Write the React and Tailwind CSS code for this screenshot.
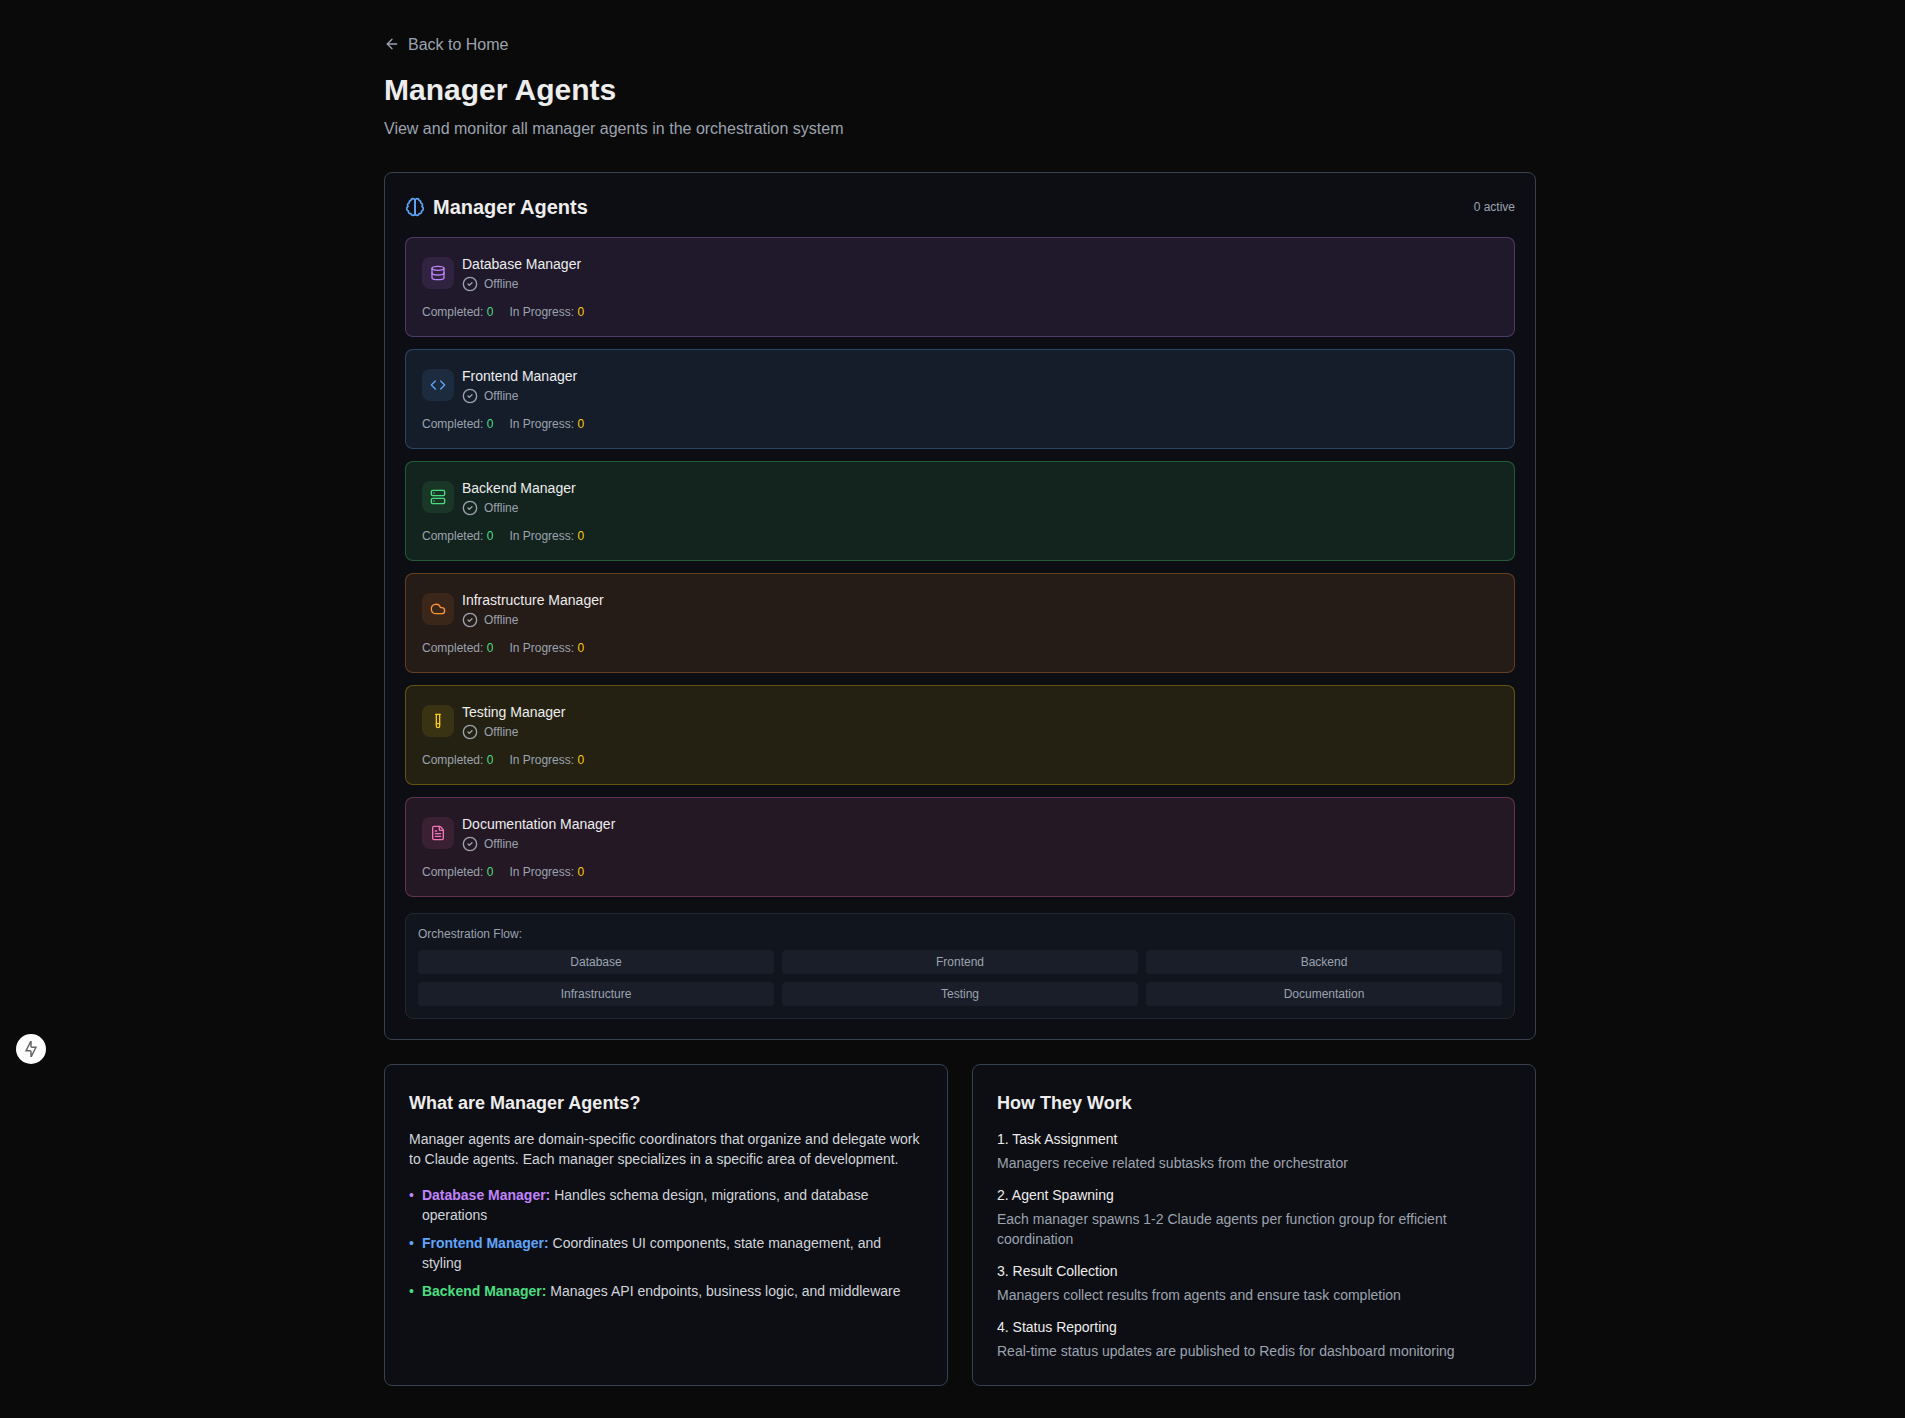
import React from "react";
import { ArrowLeft, Database, Code, Server, Cloud, TestTube, FileText, CircleCheck } from "lucide-react";

const managers = [
  { name: "Database Manager", Icon: Database, card: "bg-[#c084fc]/10 border-[#c084fc]/30", tile: "bg-[#c084fc]/10 text-[#c084fc]" },
  { name: "Frontend Manager", Icon: Code, card: "bg-[#60a5fa]/10 border-[#60a5fa]/30", tile: "bg-[#60a5fa]/10 text-[#60a5fa]" },
  { name: "Backend Manager", Icon: Server, card: "bg-[#4ade80]/10 border-[#4ade80]/30", tile: "bg-[#4ade80]/10 text-[#4ade80]" },
  { name: "Infrastructure Manager", Icon: Cloud, card: "bg-[#fb923c]/10 border-[#fb923c]/30", tile: "bg-[#fb923c]/10 text-[#fb923c]" },
  { name: "Testing Manager", Icon: TestTube, card: "bg-[#facc15]/10 border-[#facc15]/30", tile: "bg-[#facc15]/10 text-[#facc15]" },
  { name: "Documentation Manager", Icon: FileText, card: "bg-[#f472b6]/10 border-[#f472b6]/30", tile: "bg-[#f472b6]/10 text-[#f472b6]" },
];

const flow = ["Database", "Frontend", "Backend", "Infrastructure", "Testing", "Documentation"];

const bullets = [
  { name: "Database Manager:", color: "text-[#c084fc]", text: "Handles schema design, migrations, and database operations" },
  { name: "Frontend Manager:", color: "text-[#60a5fa]", text: "Coordinates UI components, state management, and styling" },
  { name: "Backend Manager:", color: "text-[#4ade80]", text: "Manages API endpoints, business logic, and middleware" },
];

const steps = [
  { title: "1. Task Assignment", text: "Managers receive related subtasks from the orchestrator" },
  { title: "2. Agent Spawning", text: "Each manager spawns 1-2 Claude agents per function group for efficient coordination" },
  { title: "3. Result Collection", text: "Managers collect results from agents and ensure task completion" },
  { title: "4. Status Reporting", text: "Real-time status updates are published to Redis for dashboard monitoring" },
];

function BrainIcon({ className }) {
  return (
    <svg
      viewBox="0 0 24 24"
      className={className}
      fill="none"
      stroke="currentColor"
      strokeWidth="2"
      strokeLinecap="round"
      strokeLinejoin="round"
    >
      <path d="M9.5 2A2.5 2.5 0 0 1 12 4.5v15a2.5 2.5 0 0 1-4.96.44 2.5 2.5 0 0 1-2.96-3.08 3 3 0 0 1-.34-5.58 2.5 2.5 0 0 1 1.32-4.24 2.5 2.5 0 0 1 1.98-3A2.5 2.5 0 0 1 9.5 2Z" />
      <path d="M14.5 2A2.5 2.5 0 0 0 12 4.5v15a2.5 2.5 0 0 0 4.96.44 2.5 2.5 0 0 0 2.96-3.08 3 3 0 0 0 .34-5.58 2.5 2.5 0 0 0-1.32-4.24 2.5 2.5 0 0 0-1.98-3A2.5 2.5 0 0 0 14.5 2Z" />
    </svg>
  );
}

function ManagerCard({ name, Icon, card, tile }) {
  return (
    <div className={`rounded-lg border p-4 ${card}`}>
      <div className="mb-3 flex items-center gap-2">
        <div className={`rounded-lg p-2 ${tile}`}>
          <Icon className="size-4" />
        </div>
        <div>
          <h3 className="text-sm">{name}</h3>
          <div className="mt-0.5 flex items-center gap-1.5">
            <CircleCheck className="size-4 text-[#9ca3af]" />
            <span className="text-xs text-[#9ca3af]">Offline</span>
          </div>
        </div>
      </div>
      <div className="flex gap-4 text-xs text-[#9ca3af]">
        <div>
          Completed: <span className="text-[#4ade80]">0</span>
        </div>
        <div>
          In Progress: <span className="text-[#facc15]">0</span>
        </div>
      </div>
    </div>
  );
}

export default function App() {
  return (
    <div className="min-h-screen overflow-hidden bg-[#0a0a0a] pt-8 pb-8 font-['Liberation_Sans',Arial,sans-serif] text-[#ededed]">
      <main className="ml-96 w-[1152px]">
        <header className="mb-8">
          <a className="mb-4 flex w-fit items-center gap-2 text-[#9ca3af]" href="#">
            <ArrowLeft className="size-4" />
            <span className="translate-y-px">Back to Home</span>
          </a>
          <h1 className="mb-2 text-3xl font-bold">Manager Agents</h1>
          <p className="translate-y-px text-[#9ca3af]">View and monitor all manager agents in the orchestration system</p>
        </header>

        <section className="rounded-lg border border-[#374151] bg-[#0d0e13] p-5">
          <div className="mb-4 flex items-center justify-between">
            <h2 className="flex items-center gap-2 text-xl font-semibold">
              <BrainIcon className="size-5 text-[#60a5fa]" />
              Manager Agents
            </h2>
            <span className="text-xs text-[#9ca3af]">0 active</span>
          </div>
          <div className="flex flex-col gap-3">
            {managers.map((m) => (
              <ManagerCard key={m.name} {...m} />
            ))}
          </div>
          <div className="mt-4 rounded-lg border border-[#1f2732] bg-[#11151d] p-3">
            <p className="mb-2 text-xs text-[#9ca3af]">Orchestration Flow:</p>
            <div className="grid grid-cols-3 gap-2">
              {flow.map((f) => (
                <div key={f} className="rounded bg-[#191e29] p-1 text-center text-xs text-[#9ca3af]">
                  {f}
                </div>
              ))}
            </div>
          </div>
        </section>

        <div className="mt-6 grid grid-cols-2 gap-6">
          <section className="rounded-lg border border-[#374151] bg-[#0d0e13] p-6">
            <h3 className="mb-3 text-lg font-semibold">What are Manager Agents?</h3>
            <p className="text-sm text-[#d1d5db]">
              Manager agents are domain-specific coordinators that organize and delegate work to Claude agents. Each
              manager specializes in a specific area of development.
            </p>
            <ul className="mt-4 flex flex-col gap-2 text-sm text-[#d1d5db]">
              {bullets.map((b) => (
                <li key={b.name} className="flex gap-2">
                  <span className={b.color}>•</span>
                  <span>
                    <strong className={b.color}>{b.name}</strong> {b.text}
                  </span>
                </li>
              ))}
            </ul>
          </section>
          <section className="rounded-lg border border-[#374151] bg-[#0d0e13] p-6">
            <h3 className="mb-3 text-lg font-semibold">How They Work</h3>
            <div className="flex flex-col gap-3 text-sm">
              {steps.map((s) => (
                <div key={s.title}>
                  <div className="mb-1">{s.title}</div>
                  <p className="text-[#9ca3af]">{s.text}</p>
                </div>
              ))}
            </div>
          </section>
        </div>
      </main>

      <button className="fixed top-[1034px] left-4 flex size-[30px] items-center justify-center rounded-full bg-white">
        <svg viewBox="0 0 16 16" className="size-4" fill="#666">
          <path
            fillRule="evenodd"
            clipRule="evenodd"
            d="M7.157 0 2.333 9.408l-.56 1.092H7a.25.25 0 0 1 .25.25V16h1.593l4.824-9.408.56-1.092H9a.25.25 0 0 1-.25-.25V0H7.157ZM7 9H4.227L7.25 3.106V5.25C7.25 6.216 8.034 7 9 7h2.773L8.75 12.894V10.75A1.75 1.75 0 0 0 7 9Z"
          />
        </svg>
      </button>
    </div>
  );
}
